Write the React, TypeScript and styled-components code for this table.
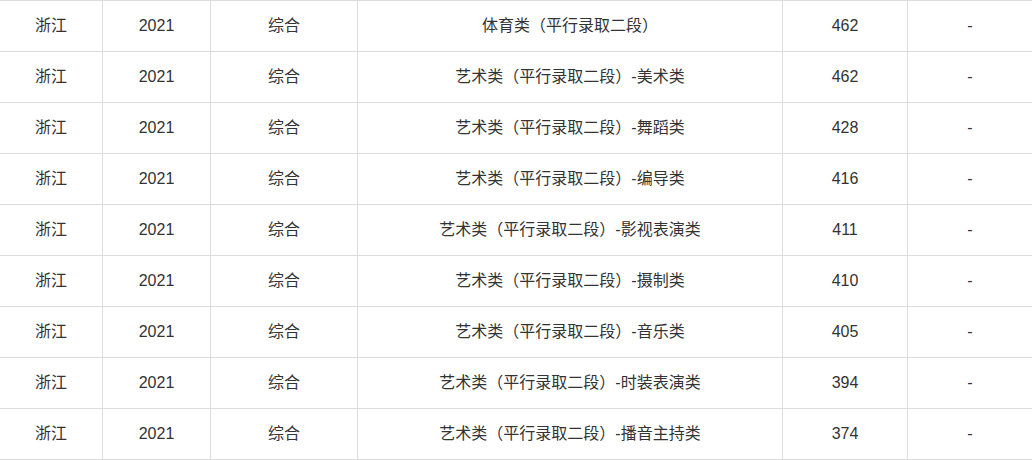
import React from "react";
import styled, { createGlobalStyle } from "styled-components";

const Global = createGlobalStyle`
  html, body { margin: 0; padding: 0; background: #fff; }
  body { font-family: "Liberation Sans", Arial, "Noto Sans CJK SC", sans-serif; }
`;

const Table = styled.div`
  width: 1032px;
  display: flex;
  flex-direction: column;
  border-bottom: 1px solid #dcdcdc;
`;

const Row = styled.div`
  display: grid;
  grid-template-columns: 103px 108px 147px 425px 125px 124px;
  border-top: 1px solid #dcdcdc;
  height: 51px;
  box-sizing: border-box;
`;

const Cell = styled.div<{ $last?: boolean }>`
  box-sizing: border-box;
  display: flex;
  align-items: center;
  justify-content: center;
  border-right: ${(p) => (p.$last ? "none" : "1px solid #dcdcdc")};
  font-size: 16px;
  line-height: 20px;
  color: #333;
  white-space: nowrap;
`;

const rows: [string, string][] = [
  ["体育类（平行录取二段）", "462"],
  ["艺术类（平行录取二段）-美术类", "462"],
  ["艺术类（平行录取二段）-舞蹈类", "428"],
  ["艺术类（平行录取二段）-编导类", "416"],
  ["艺术类（平行录取二段）-影视表演类", "411"],
  ["艺术类（平行录取二段）-摄制类", "410"],
  ["艺术类（平行录取二段）-音乐类", "405"],
  ["艺术类（平行录取二段）-时装表演类", "394"],
  ["艺术类（平行录取二段）-播音主持类", "374"],
];

export default function App() {
  return (
    <>
      <Global />
      <Table>
        {rows.map(([name, score], i) => (
          <Row key={i}>
            <Cell>浙江</Cell>
            <Cell>2021</Cell>
            <Cell>综合</Cell>
            <Cell>{name}</Cell>
            <Cell>{score}</Cell>
            <Cell $last>-</Cell>
          </Row>
        ))}
      </Table>
    </>
  );
}
